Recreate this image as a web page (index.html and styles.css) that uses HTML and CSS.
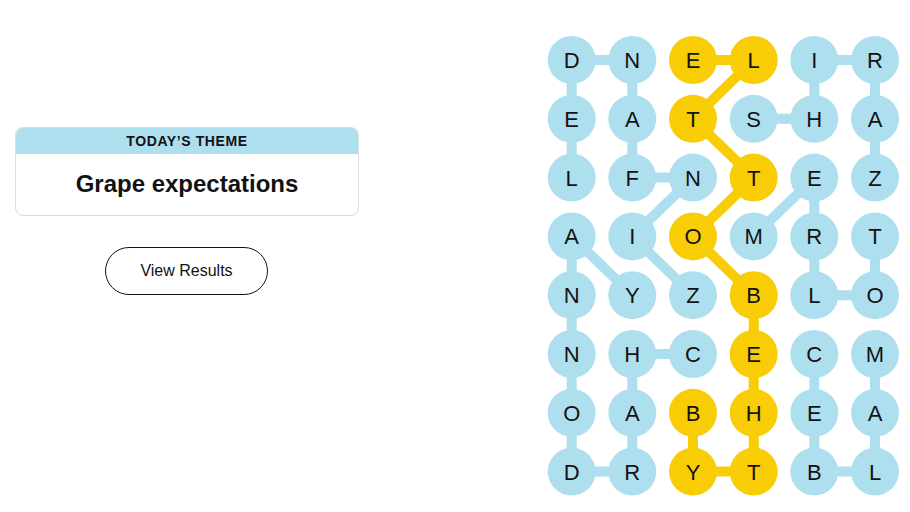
FILE: index.html
```html
<!DOCTYPE html>
<html lang="en">
<head>
<meta charset="utf-8">
<title>Strands</title>
<link rel="stylesheet" href="styles.css">
</head>
<body>
<main class="page">
  <section class="side">
    <div class="theme-card">
      <div class="theme-head">TODAY’S THEME</div>
      <div class="theme-body">Grape expectations</div>
    </div>
    <button class="results-btn" type="button">View Results</button>
  </section>
  <section class="board-wrap">
    <svg class="board" viewBox="540 0 370 512" width="370" height="512" aria-label="Strands board">
      <g class="links blue">
        <polyline points="693,295.2 632.3,236.4 693,177.6 632.3,177.6 632.3,60 571.7,60 571.7,177.6"/>
        <polyline points="693,354 632.3,354 632.3,471.6 571.7,471.6 571.7,236.4 632.3,295.2"/>
        <polyline points="753.7,118.8 814.3,118.8 814.3,60 875,60 875,177.6"/>
        <polyline points="753.7,236.4 814.3,177.6 814.3,295.2 875,295.2 875,236.4"/>
        <polyline points="875,354 875,471.6 814.3,471.6 814.3,354"/>
      </g>
      <g class="links gold">
        <polyline points="693,60 753.7,60 693,118.8 753.7,177.6 693,236.4 753.7,295.2 753.7,471.6 693,471.6 693,412.8"/>
      </g>
      <g class="cells">
        <circle cx="571.7" cy="60" r="24"/><circle cx="632.3" cy="60" r="24"/><circle class="sp" cx="693" cy="60" r="24"/><circle class="sp" cx="753.7" cy="60" r="24"/><circle cx="814.3" cy="60" r="24"/><circle cx="875" cy="60" r="24"/>
        <circle cx="571.7" cy="118.8" r="24"/><circle cx="632.3" cy="118.8" r="24"/><circle class="sp" cx="693" cy="118.8" r="24"/><circle cx="753.7" cy="118.8" r="24"/><circle cx="814.3" cy="118.8" r="24"/><circle cx="875" cy="118.8" r="24"/>
        <circle cx="571.7" cy="177.6" r="24"/><circle cx="632.3" cy="177.6" r="24"/><circle cx="693" cy="177.6" r="24"/><circle class="sp" cx="753.7" cy="177.6" r="24"/><circle cx="814.3" cy="177.6" r="24"/><circle cx="875" cy="177.6" r="24"/>
        <circle cx="571.7" cy="236.4" r="24"/><circle cx="632.3" cy="236.4" r="24"/><circle class="sp" cx="693" cy="236.4" r="24"/><circle cx="753.7" cy="236.4" r="24"/><circle cx="814.3" cy="236.4" r="24"/><circle cx="875" cy="236.4" r="24"/>
        <circle cx="571.7" cy="295.2" r="24"/><circle cx="632.3" cy="295.2" r="24"/><circle cx="693" cy="295.2" r="24"/><circle class="sp" cx="753.7" cy="295.2" r="24"/><circle cx="814.3" cy="295.2" r="24"/><circle cx="875" cy="295.2" r="24"/>
        <circle cx="571.7" cy="354" r="24"/><circle cx="632.3" cy="354" r="24"/><circle cx="693" cy="354" r="24"/><circle class="sp" cx="753.7" cy="354" r="24"/><circle cx="814.3" cy="354" r="24"/><circle cx="875" cy="354" r="24"/>
        <circle cx="571.7" cy="412.8" r="24"/><circle cx="632.3" cy="412.8" r="24"/><circle class="sp" cx="693" cy="412.8" r="24"/><circle class="sp" cx="753.7" cy="412.8" r="24"/><circle cx="814.3" cy="412.8" r="24"/><circle cx="875" cy="412.8" r="24"/>
        <circle cx="571.7" cy="471.6" r="24"/><circle cx="632.3" cy="471.6" r="24"/><circle class="sp" cx="693" cy="471.6" r="24"/><circle class="sp" cx="753.7" cy="471.6" r="24"/><circle cx="814.3" cy="471.6" r="24"/><circle cx="875" cy="471.6" r="24"/>
      </g>
      <g class="letters">
        <text x="571.7" y="68">D</text><text x="632.3" y="68">N</text><text x="693" y="68">E</text><text x="753.7" y="68">L</text><text x="814.3" y="68">I</text><text x="875" y="68">R</text>
        <text x="571.7" y="126.8">E</text><text x="632.3" y="126.8">A</text><text x="693" y="126.8">T</text><text x="753.7" y="126.8">S</text><text x="814.3" y="126.8">H</text><text x="875" y="126.8">A</text>
        <text x="571.7" y="185.6">L</text><text x="632.3" y="185.6">F</text><text x="693" y="185.6">N</text><text x="753.7" y="185.6">T</text><text x="814.3" y="185.6">E</text><text x="875" y="185.6">Z</text>
        <text x="571.7" y="244.4">A</text><text x="632.3" y="244.4">I</text><text x="693" y="244.4">O</text><text x="753.7" y="244.4">M</text><text x="814.3" y="244.4">R</text><text x="875" y="244.4">T</text>
        <text x="571.7" y="303.2">N</text><text x="632.3" y="303.2">Y</text><text x="693" y="303.2">Z</text><text x="753.7" y="303.2">B</text><text x="814.3" y="303.2">L</text><text x="875" y="303.2">O</text>
        <text x="571.7" y="362">N</text><text x="632.3" y="362">H</text><text x="693" y="362">C</text><text x="753.7" y="362">E</text><text x="814.3" y="362">C</text><text x="875" y="362">M</text>
        <text x="571.7" y="420.8">O</text><text x="632.3" y="420.8">A</text><text x="693" y="420.8">B</text><text x="753.7" y="420.8">H</text><text x="814.3" y="420.8">E</text><text x="875" y="420.8">A</text>
        <text x="571.7" y="479.6">D</text><text x="632.3" y="479.6">R</text><text x="693" y="479.6">Y</text><text x="753.7" y="479.6">T</text><text x="814.3" y="479.6">B</text><text x="875" y="479.6">L</text>
      </g>
    </svg>
  </section>
</main>
</body>
</html>
```
FILE: styles.css
```css
html, body {
  margin: 0;
  padding: 0;
  background: #ffffff;
}
body {
  font-family: "Liberation Sans", Arial, sans-serif;
  color: #121212;
}
.page {
  display: flex;
  width: 910px;
  height: 512px;
  overflow: hidden;
}
.side {
  width: 540px;
  padding: 127px 0 0 15px;
  box-sizing: border-box;
  display: flex;
  flex-direction: column;
  align-items: flex-start;
}
.theme-card {
  width: 344px;
  box-sizing: border-box;
  border: 1px solid #dcdcdc;
  border-radius: 8px;
  overflow: hidden;
  background: #fff;
}
.theme-head {
  height: 26px;
  background: #aedfee;
  display: flex;
  align-items: center;
  justify-content: center;
  font-size: 14px;
  font-weight: 700;
  letter-spacing: 0.6px;
  color: #121212;
}
.theme-body {
  height: 61px;
  display: flex;
  align-items: center;
  justify-content: center;
  font-size: 24px;
  font-weight: 700;
  color: #121212;
  padding-bottom: 2px;
  box-sizing: border-box;
}
.results-btn {
  margin: 31px 0 0 90px;
  width: 163px;
  height: 48px;
  border: 1px solid #121212;
  border-radius: 24px;
  background: #fff;
  font-family: "Liberation Sans", Arial, sans-serif;
  font-size: 16px;
  color: #121212;
  padding: 0;
}
.board-wrap {
  width: 370px;
  height: 512px;
}
.board {
  display: block;
}
.links polyline {
  fill: none;
  stroke-width: 10;
  stroke-linejoin: round;
  stroke-linecap: round;
}
.links.blue polyline { stroke: #aedfee; }
.links.gold polyline { stroke: #f8cd05; }
.cells circle { fill: #aedfee; }
.cells circle.sp { fill: #f8cd05; }
.letters text {
  font-family: "Liberation Sans", Arial, sans-serif;
  font-size: 22px;
  fill: #121212;
  text-anchor: middle;
}
```
